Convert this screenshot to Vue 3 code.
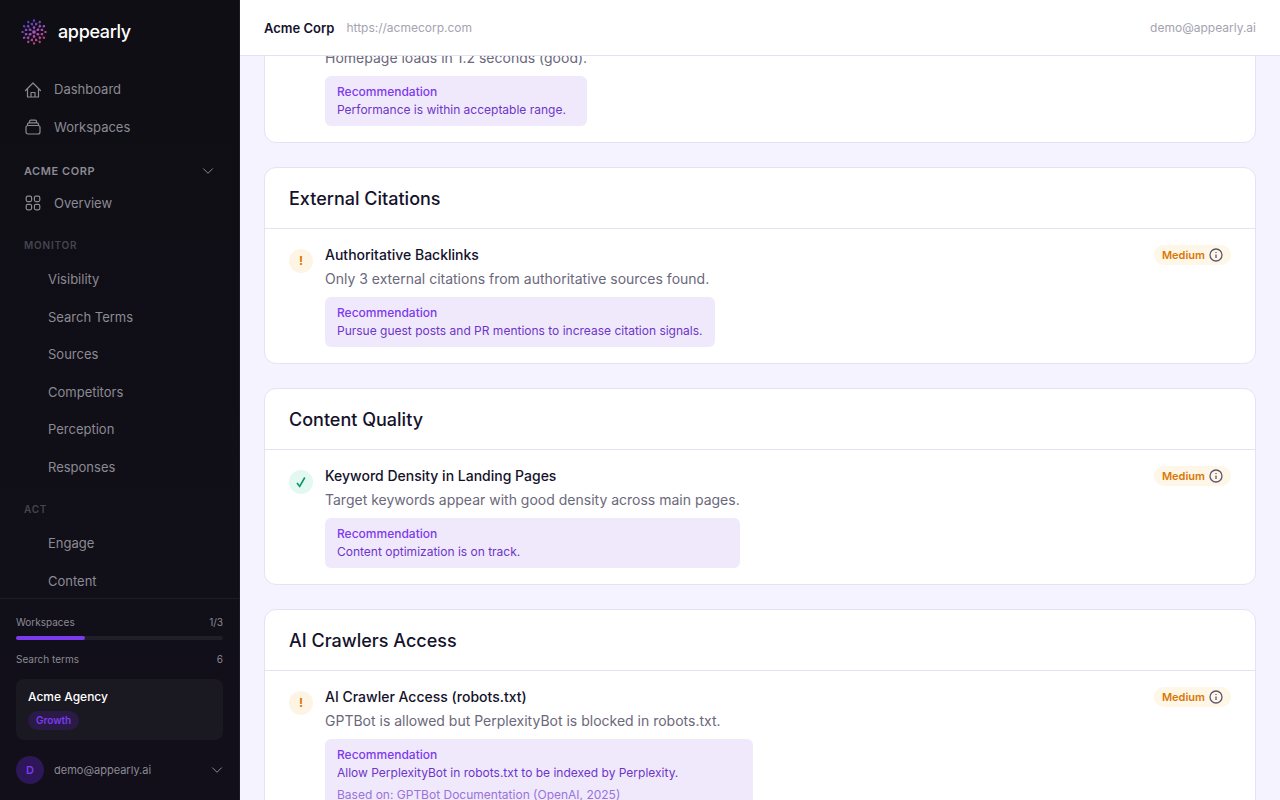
<script setup>
    import { ref } from 'vue';

    const topLinks = [
        { label: 'Dashboard', icon: 'home' },
        { label: 'Workspaces', icon: 'stack' }
    ];

    const groups = [
        { title: 'Monitor', links: ['Visibility', 'Search Terms', 'Sources', 'Competitors', 'Perception', 'Responses'] },
        { title: 'Act', links: ['Engage', 'Content'] }
    ];

    const checks = [
        {
            detail: 'Homepage loads in 1.2 seconds (good).',
            advice: 'Performance is within acceptable range.'
        },
        {
            section: 'External Citations',
            status: 'warn',
            name: 'Authoritative Backlinks',
            detail: 'Only 3 external citations from authoritative sources found.',
            advice: 'Pursue guest posts and PR mentions to increase citation signals.',
            impact: 'Medium'
        },
        {
            section: 'Content Quality',
            status: 'pass',
            name: 'Keyword Density in Landing Pages',
            detail: 'Target keywords appear with good density across main pages.',
            advice: 'Content optimization is on track.',
            impact: 'Medium'
        },
        {
            section: 'AI Crawlers Access',
            status: 'warn',
            name: 'AI Crawler Access (robots.txt)',
            detail: 'GPTBot is allowed but PerplexityBot is blocked in robots.txt.',
            advice: 'Allow PerplexityBot in robots.txt to be indexed by Perplexity.',
            source: 'Based on: GPTBot Documentation (OpenAI, 2025)',
            impact: 'Medium'
        }
    ];

    const workspaceOpen = ref(true);
    const usage = { used: 1, limit: 3 };

    // logo: rings of dots round a centre, joined by thin lines
    function ring(count, radius, size, turn){
        return Array.from({ length: count }, (_, i) => {
            const angle = (i / count) * Math.PI * 2 + turn;
            return { x: 13 + Math.cos(angle) * radius, y: 13 + Math.sin(angle) * radius, size };
        });
    }

    const inner = ring(6, 4.4, 1.3, Math.PI / 6);
    const middle = ring(12, 8.2, 1.2, Math.PI / 12);
    const outer = ring(12, 11.6, 1.1, 0);
    const dots = [{ x: 13, y: 13, size: 1.8 }, ...inner, ...middle, ...outer];

    function line(a, b){
        return `M${a.x} ${a.y}L${b.x} ${b.y}`;
    }

    const web = [
        ...inner.map(dot => line(dots[0], dot)),
        ...middle.map((dot, i) => line(dot, inner[Math.floor(i / 2)])),
        ...outer.map((dot, i) => line(dot, middle[i]) + line(dot, middle[(i + 11) % 12]))
    ].join('');
</script>

<template>
    <div class="app">
        <aside class="sidebar">
            <a href="#" class="brand">
                <svg width="26" height="26" viewBox="0 0 26 26" aria-hidden="true">
                    <defs>
                        <linearGradient id="logo" x1="4" y1="0" x2="20" y2="26" gradientUnits="userSpaceOnUse">
                            <stop offset="0" stop-color="#3a3fd0" />
                            <stop offset="0.5" stop-color="#a84fc4" />
                            <stop offset="1" stop-color="#d0406c" />
                        </linearGradient>
                    </defs>
                    <path :d="web" stroke="url(#logo)" stroke-width="0.6" fill="none" opacity="0.6" />
                    <circle v-for="(dot, i) in dots" :key="i" :cx="dot.x" :cy="dot.y" :r="dot.size" fill="url(#logo)" />
                </svg>
                <span>appearly</span>
            </a>

            <nav class="menu">
                <a v-for="link in topLinks" :key="link.label" href="#" class="link">
                    <svg v-if="link.icon === 'home'" class="icon" viewBox="0 0 18 18">
                        <path d="M1.500 9.500L9 2l7.500 7.500M3.500 7.500v8.500h11V7.500M7 16v-4.500h4V16" />
                    </svg>
                    <svg v-else class="icon" viewBox="0 0 18 18">
                        <rect x="2" y="7.500" width="14" height="8.500" rx="2" />
                        <path d="M3.500 7.500V6.500a1.700 1.700 0 0 1 1.700-1.700h7.600a1.700 1.700 0 0 1 1.700 1.700v1M5.500 4.800V3.500A1.300 1.300 0 0 1 6.800 2.200h4.400a1.300 1.300 0 0 1 1.300 1.300v1.300" />
                    </svg>
                    {{ link.label }}
                </a>

                <button type="button" class="workspace" :aria-expanded="workspaceOpen" @click="workspaceOpen = !workspaceOpen">
                    Acme Corp
                    <svg class="chevron" viewBox="0 0 12 12"><path d="M1.500 3.800L6 8.300l4.500-4.500" /></svg>
                </button>

                <template v-if="workspaceOpen">
                    <a href="#" class="link">
                        <svg class="icon" viewBox="0 0 18 18">
                            <rect x="2.200" y="2.200" width="5.400" height="5.400" rx="1.500" />
                            <rect x="10.400" y="2.200" width="5.400" height="5.400" rx="1.500" />
                            <rect x="2.200" y="10.400" width="5.400" height="5.400" rx="1.500" />
                            <rect x="10.400" y="10.400" width="5.400" height="5.400" rx="1.500" />
                        </svg>
                        Overview
                    </a>
                    <template v-for="group in groups" :key="group.title">
                        <h3>{{ group.title }}</h3>
                        <a v-for="name in group.links" :key="name" href="#" class="link sub">{{ name }}</a>
                    </template>
                </template>
            </nav>

            <div class="account">
                <div class="usage">
                    <span>Workspaces</span>
                    <span>{{ usage.used }}/{{ usage.limit }}</span>
                </div>
                <div class="track">
                    <div class="fill" :style="{ width: (usage.used / usage.limit) * 100 + '%' }"></div>
                </div>
                <div class="usage">
                    <span>Search terms</span>
                    <span>6</span>
                </div>
                <div class="plan">
                    <strong>Acme Agency</strong>
                    <span class="tier">Growth</span>
                </div>
                <button type="button" class="user">
                    <span class="avatar">D</span>
                    <span class="email">demo@appearly.ai</span>
                    <svg class="chevron" viewBox="0 0 12 12"><path d="M1.500 3.800L6 8.300l4.500-4.500" /></svg>
                </button>
            </div>
        </aside>

        <div class="page">
            <header>
                <strong>Acme Corp</strong>
                <a href="#">https://acmecorp.com</a>
                <span class="email">demo@appearly.ai</span>
            </header>

            <main>
                <section v-for="check in checks" :key="check.detail" class="card">
                    <h2 v-if="check.section">{{ check.section }}</h2>
                    <div class="check">
                        <div class="status" :class="check.status">
                            <template v-if="check.status === 'warn'">!</template>
                            <svg v-else-if="check.status === 'pass'" viewBox="0 0 12 12">
                                <path d="M2 7l2.700 3.400L9.800 1.500" />
                            </svg>
                        </div>
                        <div class="text">
                            <h4 v-if="check.name">{{ check.name }}</h4>
                            <p class="detail">{{ check.detail }}</p>
                            <div class="advice" :class="{ sourced: check.source }">
                                <p class="heading">Recommendation</p>
                                <p>{{ check.advice }}</p>
                                <p v-if="check.source" class="source">{{ check.source }}</p>
                            </div>
                        </div>
                        <span v-if="check.impact" class="impact">
                            {{ check.impact }}
                            <button type="button" aria-label="About this rating">
                                <svg viewBox="0 0 14 14">
                                    <circle cx="7" cy="7" r="6" />
                                    <path d="M7 6.500v3.500M7 4v1" />
                                </svg>
                            </button>
                        </span>
                    </div>
                </section>
            </main>
        </div>
    </div>
</template>

<style>
    body{
        background-color: #F5F3FF;
    }
</style>

<style scoped>
    .app{
        display: flex;
        height: 100vh;
        overflow: hidden;
        font-family: Inter, "Liberation Sans", sans-serif;
        font-size: 14px;
        line-height: 20px;
        color: #14122B;
    }

    .app *{
        box-sizing: border-box;
    }

    h2, h3, h4, p{
        margin: 0;
        font-weight: 500;
    }

    a{
        color: inherit;
        text-decoration: none;
    }

    button{
        border: 0;
        padding: 0;
        background: none;
        font: inherit;
        color: inherit;
        cursor: pointer;
    }

    svg{
        flex: none;
    }

    .sidebar{
        display: flex;
        flex-direction: column;
        flex: none;
        width: 240px;
        background: linear-gradient(#0E0E14, #120F1A);
        border-right: 1px solid #1D1B25;
        color: #8C8A93;
    }

    .brand{
        display: flex;
        align-items: center;
        gap: 11px;
        height: 64px;
        padding: 0 21px;
        flex: none;
        font-size: 18px;
        font-weight: 500;
        letter-spacing: -0.02em;
        color: #FFFFFF;
    }

    .menu{
        flex: 1;
        min-height: 0;
        overflow: hidden;
        padding: 8px 12px 0;
    }

    .link{
        display: flex;
        align-items: center;
        gap: 12px;
        padding: 8px 12px;
        margin-bottom: 2px;
        font-size: 13px;
        line-height: 1.5;
    }

    .sub{
        padding-left: 36px;
    }

    .icon, .chevron{
        width: 18px;
        height: 18px;
        fill: none;
        stroke: currentColor;
        stroke-width: 1.2;
        stroke-linecap: round;
        stroke-linejoin: round;
    }

    .chevron{
        width: 12px;
        height: 12px;
        stroke-width: 1;
    }

    .workspace{
        display: flex;
        justify-content: space-between;
        align-items: center;
        width: 100%;
        padding: 16px 13px 6px 12px;
        font-size: 11px;
        font-weight: 600;
        line-height: 1.5;
        letter-spacing: 0.05em;
        text-transform: uppercase;
    }

    .menu h3{
        padding: 15px 12px 9px;
        font-size: 10px;
        font-weight: 600;
        line-height: 15px;
        letter-spacing: 0.08em;
        text-transform: uppercase;
        color: #46444E;
    }

    .account{
        padding: 16px;
        border-top: 1px solid #1D1B25;
    }

    .usage{
        display: flex;
        justify-content: space-between;
        font-size: 10px;
        line-height: 15px;
    }

    .track{
        height: 4px;
        margin: 6px 0 12px;
        border-radius: 2px;
        background-color: #201E27;
    }

    .fill{
        height: 100%;
        border-radius: 2px;
        background-color: #7C3AED;
    }

    .plan{
        display: flex;
        flex-direction: column;
        align-items: flex-start;
        gap: 4px;
        margin: 12px 0 16px;
        padding: 8px 12px 10px;
        border-radius: 8px;
        background-color: #1A1821;
    }

    .plan strong{
        font-size: 12px;
        font-weight: 500;
        color: #FFFFFF;
    }

    .tier{
        padding: 1px 8px;
        border-radius: 10px;
        background-color: #291A46;
        font-size: 10px;
        font-weight: 600;
        line-height: 17px;
        color: #7C3AED;
    }

    .user{
        display: flex;
        align-items: center;
        gap: 10px;
        width: 100%;
        font-size: 11px;
        text-align: left;
    }

    .user .email{
        flex: 1;
    }

    .avatar{
        width: 28px;
        border-radius: 50%;
        background-color: #2D1758;
        font-weight: 600;
        line-height: 28px;
        text-align: center;
        color: #7C3AED;
    }

    .page{
        display: flex;
        flex-direction: column;
        flex: 1;
        min-width: 0;
    }

    header{
        display: flex;
        align-items: center;
        gap: 12px;
        height: 56px;
        flex: none;
        padding: 0 24px;
        border-bottom: 1px solid #E5E2F2;
        background-color: #FFFFFF;
        font-size: 12px;
        color: #A5A3B0;
        z-index: 1;
    }

    header strong{
        font-size: 13px;
        font-weight: 600;
        color: #14122B;
    }

    header .email{
        margin-left: auto;
    }

    main{
        display: flex;
        flex-direction: column;
        gap: 24px;
        margin-top: -25px;
        padding: 0 24px;
    }

    .card{
        flex: none;
        border: 1px solid #E5E2F2;
        border-radius: 12px;
        background-color: #FFFFFF;
    }

    .card h2{
        padding: 19px 24px 17px;
        border-bottom: 1px solid #E5E2F2;
        font-size: 18px;
        line-height: 24px;
    }

    .check{
        display: flex;
        align-items: flex-start;
        gap: 12px;
        padding: 16px 24px;
    }

    .status{
        display: flex;
        align-items: center;
        justify-content: center;
        width: 24px;
        height: 24px;
        margin-top: 4px;
        border-radius: 50%;
        font-size: 12px;
        font-weight: 700;
    }

    .warn{
        background-color: #FEF4E4;
        color: #D97706;
    }

    .pass{
        background-color: #E3F8F0;
        color: #059669;
    }

    .pass svg{
        width: 12px;
        height: 12px;
        fill: none;
        stroke: currentColor;
        stroke-width: 1.6;
    }

    h4{
        margin-bottom: 4px;
        font-size: 14px;
    }

    .detail{
        font-weight: 400;
        color: #6B687B;
    }

    .advice{
        margin-top: 8px;
        padding: 7px 12px;
        border-radius: 6px;
        background-color: #F0E9FC;
        font-size: 12px;
        line-height: 18px;
        color: #6D35C9;
    }

    .advice p{
        font-weight: 400;
    }

    .advice .heading{
        font-weight: 500;
        color: #7C3AED;
    }

    .sourced{
        min-width: 428px;
    }

    .advice .source{
        margin-top: 4px;
        color: #9B72DC;
    }

    .impact{
        display: flex;
        align-items: center;
        gap: 4px;
        margin-left: auto;
        padding: 0 8px;
        border-radius: 10px;
        background-color: #FEF6E7;
        font-size: 11px;
        font-weight: 600;
        color: #D97706;
    }

    .impact button{
        display: flex;
        color: #5D5670;
    }

    .impact svg{
        width: 14px;
        height: 14px;
        fill: none;
        stroke: currentColor;
        stroke-width: 1.3;
    }
</style>
